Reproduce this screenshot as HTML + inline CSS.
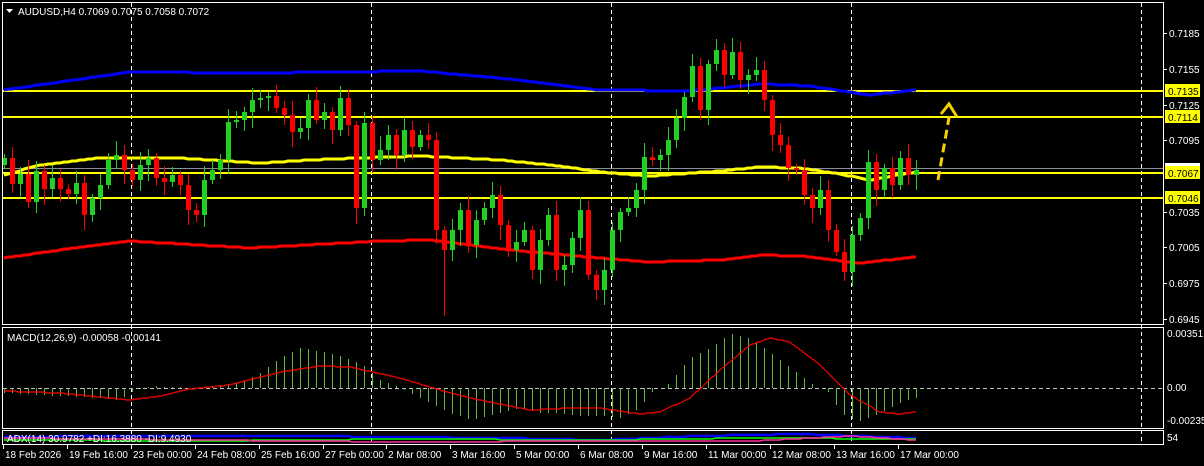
<!DOCTYPE html>
<html><head><meta charset="utf-8"><style>
html,body{margin:0;padding:0;background:#000;overflow:hidden}
svg{display:block}
text{font-family:"Liberation Sans",sans-serif;font-size:10px;fill:#fff}
</style></head><body>
<svg id="s" width="1204" height="466" xmlns="http://www.w3.org/2000/svg">
<rect width="1204" height="466" fill="#000"/>
<g id="bg"></g>
<g id="c"></g>
<g id="fg"></g>
<rect x="2.5" y="2.5" width="1161" height="322" fill="none" stroke="#fff"/>
<rect x="2.5" y="327.5" width="1161" height="101" fill="none" stroke="#fff"/>
<rect x="2.5" y="430.5" width="1161" height="14" fill="none" stroke="#fff"/>
<path d="M6 9h7l-3.5 4z" fill="#fff"/>
<text x="18" y="15">AUDUSD,H4  0.7069 0.7075 0.7058 0.7072</text>
<text x="7" y="341">MACD(12,26,9) -0.00058 -0.00141</text>
<g id="ax"></g>
<path d="M938 180L950 112" stroke="#f5d000" stroke-width="3" stroke-dasharray="9,5" fill="none"/>
<path d="M941 114L949 104L957 117" stroke="#f5d000" stroke-width="3" fill="none"/>
</svg>
<script>
(function(){
var NS="http://www.w3.org/2000/svg";
function el(p,t,a,txt){var e=document.createElementNS(NS,t);for(var k in a)e.setAttribute(k,a[k]);if(txt)e.textContent=txt;document.getElementById(p).appendChild(e);return e;}
[131,371,611,851,1141].forEach(function(x){el('bg','path',{d:'M'+(x+.5)+' 3V444',stroke:'#fff','stroke-dasharray':'4,3'});});
el('bg','path',{d:'M3 168.5H1163',stroke:'#8a9099'});
[91,117,173,198].forEach(function(y){el('bg','path',{d:'M3 '+y+'H1163',stroke:'#ffff00','stroke-width':2});});
function interp(pts,x){for(var i=0;i<pts.length-1;i++){if(x>=pts[i][0]&&x<=pts[i+1][0]){var t=(x-pts[i][0])/(pts[i+1][0]-pts[i][0]);return pts[i][1]+t*(pts[i+1][1]-pts[i][1]);}}return pts[pts.length-1][1];}
function line(g,pts,col,w,x0,x1,step){var d='';for(var x=x0;x<=x1;x+=step){var y=Math.round(interp(pts,x));d+=(d?'L':'M')+x+' '+y;}el(g,'path',{d:d,stroke:col,'stroke-width':w,fill:'none'});}
line('bg',[[4,90],[60,82],[130,72],[250,73],[420,71],[520,80],[600,90],[690,91],[760,84],[810,86],[870,95],[915,90]],'#0000ff',3,4,916,4);
line('bg',[[4,258],[60,250],[130,241],[250,248],[380,241],[430,240],[500,249],[600,258],[650,262],[720,260],[760,255],[800,256],[860,263],[915,257]],'#ff0000',3,4,916,4);
line('bg',[[4,175],[40,165],[100,158],[180,158],[260,163],[330,159],[420,156],[500,160],[560,166],[600,172],[650,176],[720,171],[760,167],[800,168],[840,174],[870,180],[915,172]],'#ffff00',3,4,916,4);
var cl=[158,184,174,202,171,189,178,189,194,183,215,198,185,160,155,170,180,165,158,178,182,175,185,210,215,180,170,160,122,120,112,100,98,96,108,115,132,128,100,120,112,130,98,125,208,123,160,150,135,155,130,147,135,140,230,250,230,210,245,220,208,195,225,250,242,230,270,240,215,270,265,238,210,275,290,270,230,212,208,190,157,160,155,140,118,97,66,110,64,50,75,52,80,75,70,100,135,145,168,170,195,208,190,230,252,272,235,218,162,190,168,185,158,175,170];
var prev=165;
for(var i=0;i<cl.length;i++){var x=4+i*8,o=prev,c=cl[i];var up=c<o;var col=up?'#22d022':'#ff0000';var tp=Math.min(o,c),bt=Math.max(o,c);if(bt-tp<2)bt=tp+2;
var hi=tp-4-((i*7)%11),lo=bt+4+((i*5)%13);if(i==55)lo=316;
el('c','path',{d:'M'+(x+.5)+' '+hi+'V'+lo,stroke:col});
el('c','rect',{x:x-2,y:tp,width:5,height:bt-tp,fill:col});prev=c;}
var hp=[[4,-5],[60,-8],[100,-10],[120,-12],[130,-5],[150,2],[200,0],[240,5],[260,15],[280,30],[300,40],[330,35],[360,25],[380,8],[400,0],[430,-15],[450,-25],[470,-32],[500,-25],[520,-20],[540,-25],[560,-25],[580,-28],[600,-28],[620,-30],[640,-20],[650,-5],[670,5],[690,30],[710,40],[730,54],[750,50],[770,35],[790,20],[810,5],[830,-5],[840,-25],[850,-30],[860,-33],[880,-25],[900,-15],[915,-10]];
el('bg','path',{d:'M3 388.5H1163',stroke:'#c0c0c0','stroke-dasharray':'4,3'});
for(var x=4;x<=916;x+=8){var h=Math.round(interp(hp,x));if(h!=0)el('bg','path',{d:'M'+(x+.5)+' 388V'+(388-h),stroke:'#5cbf3c'});}
line('bg',[[4,391],[60,393],[130,400],[160,396],[190,389],[230,385],[280,372],[320,366],[350,367],[400,378],[440,390],[480,400],[530,410],[570,408],[600,408],[640,414],[660,412],[690,398],[720,370],[750,345],[770,338],[790,342],[820,365],[850,395],[880,412],[900,414],[915,412]],'#ff0000',1.2,4,916,2);
line('bg',[[4,437],[100,436],[300,436],[500,438],[600,440],[700,436],[800,434],[915,438]],'#0000ff',2.5,4,916,4);
line('bg',[[4,440],[200,441],[400,439],[600,440],[750,438],[915,439]],'#00ff00',1.5,4,916,4);
line('bg',[[4,438],[200,440],[400,442],[600,441],[750,441],[850,436],[915,440]],'#ff2fa0',1.5,4,916,4);
el('fg','text',{x:7,y:442},'ADX(14) 30.9782 +DI:16.3880 -DI:9.4930');
[[33,'0.7185'],[69,'0.7155'],[105,'0.7125'],[140,'0.7095'],[212,'0.7035'],[247,'0.7005'],[283,'0.6975'],[319,'0.6945']].forEach(function(a){el('ax','path',{d:'M1164 '+a[0]+'.5h3',stroke:'#fff'});el('ax','text',{x:1169,y:a[0]+4},a[1]);});
el('ax','rect',{x:1165,y:163,width:35,height:11,fill:'#fff'});
[[91,'0.7135'],[117,'0.7114'],[173,'0.7067'],[198,'0.7046']].forEach(function(a){el('ax','rect',{x:1165,y:a[0]-7,width:35,height:13,fill:'#ffff00'});el('ax','text',{x:1168,y:a[0]+4,style:'fill:#000'},a[1]);});
[[337,'0.00351'],[391,'0.00'],[424,'-0.00235'],[441,'54']].forEach(function(a){el('ax','text',{x:1167,y:a[0]},a[1]);});
var tl=[[3,'18 Feb 2026'],[67,'19 Feb 16:00'],[131,'23 Feb 00:00'],[195,'24 Feb 08:00'],[259,'25 Feb 16:00'],[323,'27 Feb 00:00'],[386,'2 Mar 08:00'],[450,'3 Mar 16:00'],[514,'5 Mar 00:00'],[578,'6 Mar 08:00'],[642,'9 Mar 16:00'],[706,'11 Mar 00:00'],[770,'12 Mar 08:00'],[834,'13 Mar 16:00'],[898,'17 Mar 00:00']];
tl.forEach(function(a){el('ax','path',{d:'M'+(a[0]+.5)+' 445v4',stroke:'#fff'});el('ax','text',{x:a[0]+2,y:458},a[1]);});
})();
</script>
</body></html>
